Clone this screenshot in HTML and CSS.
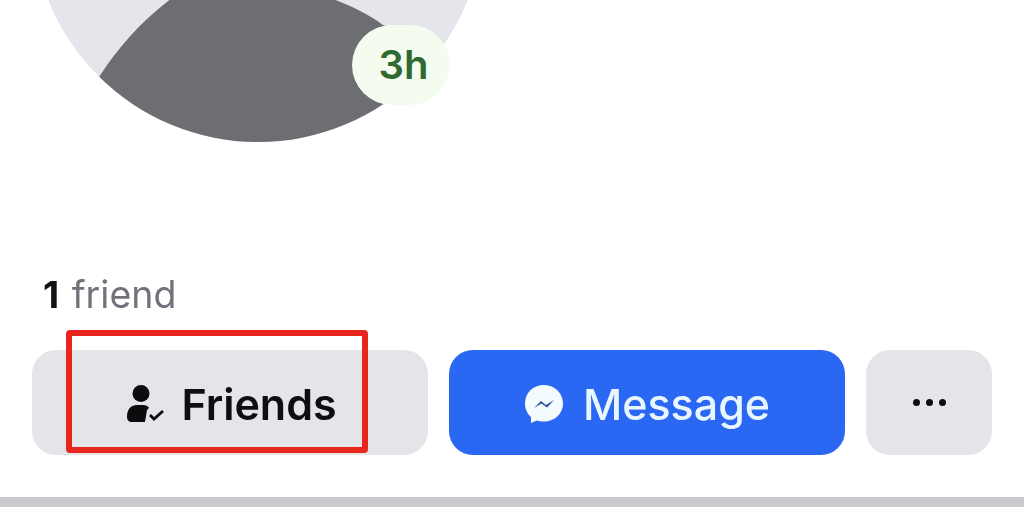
FILE: index.html
```html
<!DOCTYPE html>
<html lang="en">
<head>
<meta charset="utf-8">
<title>Profile</title>
<link rel="stylesheet" href="styles.css">
</head>
<body>
<main class="page">
  <section class="story">
    <svg class="avatar" viewBox="0 0 520 143" aria-hidden="true">
      <defs><clipPath id="disc"><circle cx="258" cy="-84" r="226"/></clipPath></defs>
      <circle cx="258" cy="-84" r="226" fill="#e4e6eb"/>
      <path d="M99 77C118 48 140 22 172 -2L330 -2C350 5 370 15 383 25L430 40L430 143L99 143Z" fill="#6c6e72" clip-path="url(#disc)"/>
    </svg>
    <span class="badge">3h</span>
  </section>
  <p class="count"><b>1</b> friend</p>
  <div class="actions">
    <button class="btn grey wide friends">
      <svg class="icon" viewBox="0 0 40 40" aria-hidden="true">
        <circle cx="16" cy="9.500" r="8.500" fill="#0b0c0e"/>
        <path d="M2 33c0-8 4-12 10-12h6c3 0 5 1 6 3l-2 2-2 12H7c-3 0-5-2-5-5z" fill="#0b0c0e"/>
        <path d="M25 31l4 4 9-8" fill="none" stroke="#0b0c0e" stroke-width="2.800"/>
      </svg>
      Friends
    </button>
    <button class="btn blue wide">
      <svg class="icon" viewBox="0 0 40 40" aria-hidden="true">
        <path d="M20 1C9 1 1 9 1 19.500c0 5.500 2.200 10.300 6 13.500v6l6-2.500c2 .7 4.500 1 7 1 11 0 19-8 19-18S31 1 20 1z" fill="#f4fbff"/>
        <path d="M10 24l7-7 5 4 8-5-7 7.500-5.500-4z" fill="#274f94"/>
      </svg>
      Message
    </button>
    <button class="btn grey more" aria-label="More"><i></i><i></i><i></i></button>
    <div class="highlight"></div>
  </div>
  <div class="divider"></div>
</main>
</body>
</html>
```
FILE: styles.css
```css
html, body { margin: 0; padding: 0; background: #fff; }
.page {
  width: 1024px;
  height: 512px;
  overflow: hidden;
  font-family: Inter, "Liberation Sans", sans-serif;
  filter: blur(0.7px);
}
.story { position: relative; height: 143px; }
.avatar { display: block; width: 520px; height: 143px; }
.badge {
  position: absolute;
  left: 352px;
  top: 25px;
  width: 98px;
  height: 80px;
  border-radius: 40px;
  background: #f4fbef;
  color: #2f6a30;
  font-size: 40px;
  font-weight: 600;
  line-height: 80px;
  text-align: center;
  text-indent: 5px;
}
.count {
  margin: 130px 0 0 43px;
  height: 44px;
  font-size: 37.500px;
  line-height: 44px;
  word-spacing: 2px;
  color: #70737a;
}
.count b { color: #111; font-weight: 700; }
.actions {
  position: relative;
  display: flex;
  gap: 21px;
  margin: 33px 32px 0;
  height: 105px;
}
.btn {
  display: flex;
  align-items: center;
  justify-content: center;
  border: 0;
  border-radius: 24px;
  padding: 2px 0 0;
  font: 500 43px Inter, "Liberation Sans", sans-serif;
}
.wide { width: 396px; gap: 19px; }
.friends { gap: 16px; padding-left: 2px; font-weight: 600; font-size: 43px; }
.grey { background: #e3e5e9; color: #0d0e10; }
.blue { background: #2a67f2; color: #e8f7ff; }
.more { width: 126px; gap: 6px; padding: 0; }
.more i { width: 7px; height: 7px; border-radius: 50%; background: #0b0c0e; }
.icon { width: 40px; height: 40px; }
.highlight {
  position: absolute;
  left: 34px;
  top: -20px;
  width: 290px;
  height: 111px;
  border: 6px solid #e8261e;
  border-radius: 4px;
}
.divider { height: 10px; margin-top: 42px; background: #c9cbcf; }
```
